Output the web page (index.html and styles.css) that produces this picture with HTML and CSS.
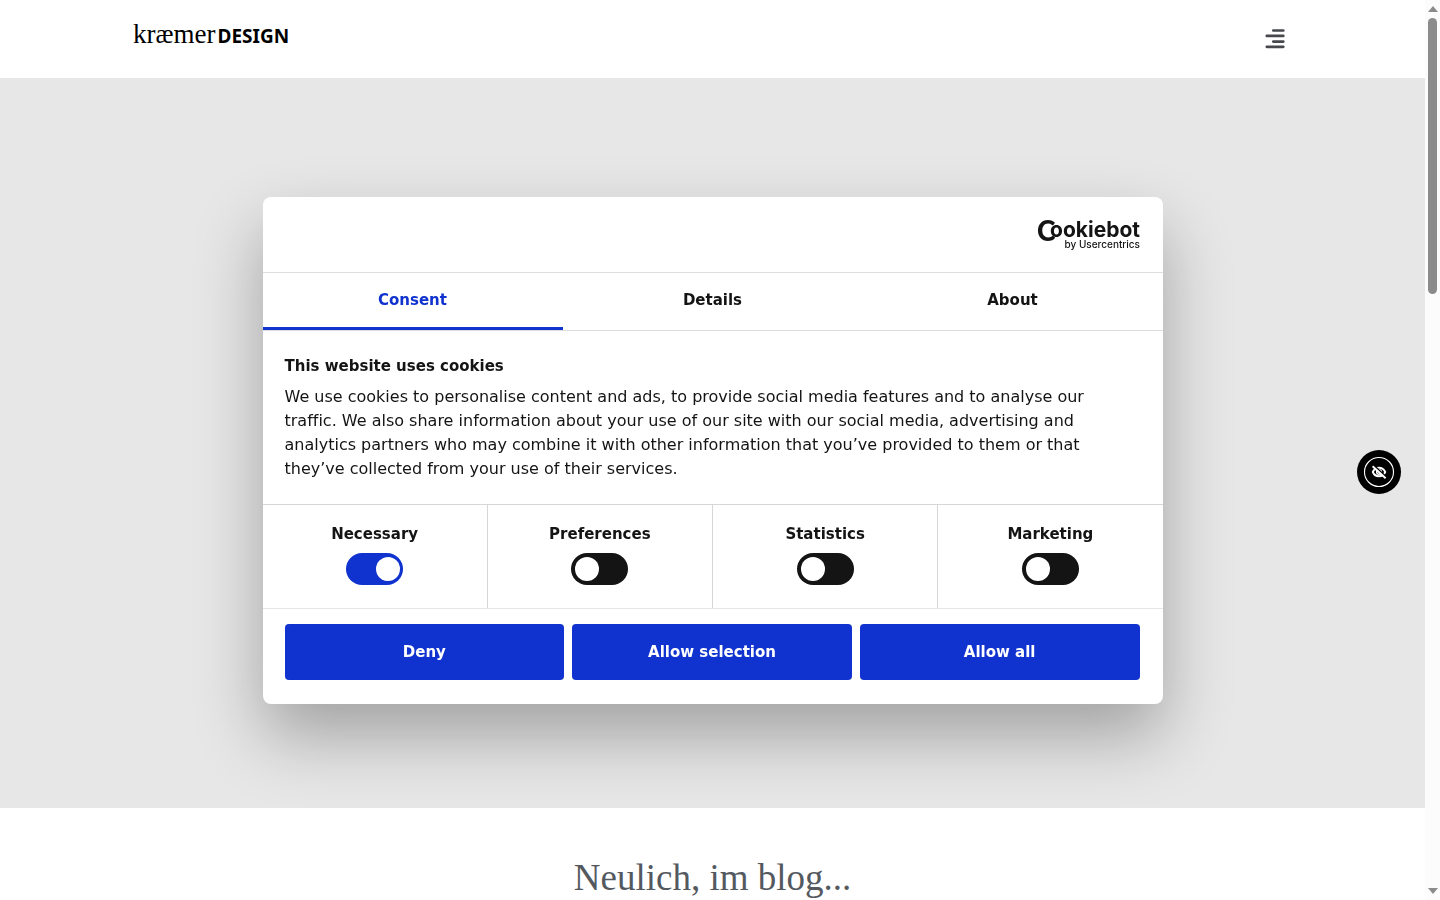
FILE: index.html
```html
<!DOCTYPE html>
<html lang="de">
<head>
	<meta charset="utf-8">
	<title>kræmerDESIGN</title>
	<meta name="viewport" content="width=device-width, initial-scale=1">
	<link rel="stylesheet" href="styles.css">
</head>
<body>
	<div class="page">
		<header class="site-header">
			<a class="logo" href="#"><span class="logo-serif">kræmer</span><span class="logo-sans">DESIGN</span></a>
			<button class="menu-btn" type="button" aria-label="Menü">
				<svg width="20" height="20" viewBox="0 0 20 20" fill="none" stroke="#47484c" stroke-width="2.7" stroke-linecap="round">
					<path d="M8.3 1.5h10M1.8 6.9h16.5M8.3 12.6h10M1.8 17.8h16.5"/>
				</svg>
			</button>
		</header>
		<main>
			<div class="hero"></div>
			<section class="blog">
				<h2>Neulich, im blog...</h2>
			</section>
		</main>
	</div>

	<button class="a11y-btn" type="button" aria-label="Barrierefreiheit">
		<svg width="44" height="44" viewBox="0 0 44 44" fill="none" stroke="#fff">
			<circle cx="22" cy="22" r="14.5" stroke-width="1.1"/>
			<path d="M15.8 22c1.3-2.9 3.5-4.3 6.2-4.3s4.9 1.4 6.2 4.3c-1.3 2.9-3.5 4.3-6.2 4.3s-4.9-1.4-6.2-4.3z" stroke-width="1.9"/>
			<circle cx="22" cy="22" r="2.3" stroke-width="1.5"/>
			<path d="M17 15.6l13 12" stroke="#000" stroke-width="1.6"/>
			<path d="M15.6 16.2l13 12" stroke-width="1.9"/>
		</svg>
	</button>

	<div class="overlay">
		<div class="dialog" role="dialog" aria-labelledby="cookie-title">
			<div class="dialog-head">
				<a href="#" aria-label="Cookiebot by Usercentrics">
					<svg class="cookiebot" width="104" height="34" viewBox="0 0 104 34" fill="#141414">
						<text class="cb-c" x="0" y="24">C</text>
						<text class="cb-name" x="103" y="20" text-anchor="end">ookiebot</text>
						<text class="cb-by" x="103" y="31" text-anchor="end">by Usercentrics</text>
					</svg>
				</a>
			</div>
			<div class="tabs" role="tablist">
				<button class="tab active" type="button" role="tab" aria-selected="true">Consent</button>
				<button class="tab" type="button" role="tab">Details</button>
				<button class="tab" type="button" role="tab">About</button>
			</div>
			<div class="dialog-body">
				<h2 id="cookie-title">This website uses cookies</h2>
				<p>We use cookies to personalise content and ads, to provide social media features and to analyse our traffic. We also share information about your use of our site with our social media, advertising and analytics partners who may combine it with other information that you’ve provided to them or that they’ve collected from your use of their services.</p>
			</div>
			<div class="types">
				<div class="type">
					<label for="necessary">Necessary</label>
					<input type="checkbox" id="necessary" checked disabled>
				</div>
				<div class="type">
					<label for="preferences">Preferences</label>
					<input type="checkbox" id="preferences">
				</div>
				<div class="type">
					<label for="statistics">Statistics</label>
					<input type="checkbox" id="statistics">
				</div>
				<div class="type">
					<label for="marketing">Marketing</label>
					<input type="checkbox" id="marketing">
				</div>
			</div>
			<div class="dialog-foot">
				<button type="button">Deny</button>
				<button type="button">Allow selection</button>
				<button type="button">Allow all</button>
			</div>
		</div>
	</div>

	<div class="scrollbar" aria-hidden="true">
		<svg width="10" height="6" viewBox="0 0 10 6"><path d="M5 0l5 6H0z" fill="#8b8b8b"/></svg>
		<div class="track"><div class="thumb"></div></div>
		<svg width="10" height="6" viewBox="0 0 10 6"><path d="M0 0h10L5 6z" fill="#8b8b8b"/></svg>
	</div>
</body>
</html>
```
FILE: styles.css
```css
* {
	box-sizing: border-box;
}
html, body {
	height: 100%;
	margin: 0;
	overflow: hidden;
}
body {
	background: #fff;
	color: #141414;
	font-family: "DejaVu Sans", sans-serif;
	font-size: 15px;
	line-height: 24px;
}
button {
	border: 0;
	padding: 0;
	font: inherit;
	cursor: pointer;
}
.page {
	margin-right: 15px;
}

/* header */
.site-header {
	display: flex;
	justify-content: space-between;
	align-items: center;
	height: 78px;
	padding: 0 140px 0 133px;
}
.logo {
	display: flex;
	align-items: baseline;
	gap: 2px;
	padding-bottom: 8px;
	color: #000;
	text-decoration: none;
	line-height: 32px;
}
.logo-serif {
	font-family: "Liberation Serif", serif;
	font-size: 27px;
}
.logo-sans {
	font-family: "Noto Sans", sans-serif;
	font-size: 19px;
	font-weight: 700;
}
.menu-btn {
	background: none;
	height: 20px;
}
.menu-btn svg, .a11y-btn svg, .cookiebot {
	display: block;
	overflow: visible;
}

.hero {
	height: 730px;
	background: #e7e7e7;
}
.blog {
	padding: 47px 20px;
}
.blog h2 {
	margin: 0;
	color: #54595f;
	font-family: "Liberation Serif", serif;
	font-size: 37px;
	font-weight: 400;
	line-height: 46px;
	text-align: center;
}

.a11y-btn {
	position: fixed;
	top: 50%;
	right: 39px;
	width: 44px;
	height: 44px;
	border-radius: 50%;
	background: #000;
}

/* cookie dialog */
.overlay {
	position: fixed;
	inset: 0 15px 0 0;
	display: flex;
	justify-content: center;
	align-items: center;
	pointer-events: none;
}
.dialog {
	width: 900px;
	max-width: 95%;
	border-radius: 8px;
	background: #fff;
	box-shadow: 0 32px 68px rgba(0,0,0,.3);
	overflow: hidden;
	pointer-events: auto;
}
.dialog-head {
	display: flex;
	justify-content: flex-end;
	align-items: center;
	height: 76px;
	padding: 0 22px;
	border-bottom: 1px solid #dedede;
}
.cb-c {
	font: 900 28px Lato, sans-serif;
}
.cb-name {
	font: 700 21px Inter, sans-serif;
}
.cb-by {
	font: 500 10px Inter, sans-serif;
}
.tabs {
	display: flex;
	height: 58px;
	border-bottom: 1px solid #dedede;
}
.tab {
	flex: 1;
	background: none;
	border-bottom: 3px solid transparent;
	color: #141414;
	font-weight: 700;
}
.tab.active {
	border-color: #1032cf;
	color: #1032cf;
}
.dialog-body {
	padding: 23px 22px;
}
.dialog-body h2 {
	margin: 0 0 7px;
	font-size: 15px;
}
.dialog-body p {
	margin: 0;
	font-size: 16px;
	font-variant-ligatures: none;
	max-width: 820px;
}
.types {
	display: flex;
	border-top: 1px solid #d6d6d6;
}
.type {
	flex: 1;
	display: flex;
	flex-direction: column;
	align-items: center;
	gap: 7px;
	padding: 17px 0 23px;
	border-right: 1px solid #d6d6d6;
	font-weight: 700;
}
.type:last-child {
	border-right: 0;
}
.type input {
	appearance: none;
	width: 57px;
	height: 32px;
	margin: 0;
	padding: 4px 3px 4px 4px;
	border-radius: 16px;
	background: #141414;
}
.type input::before {
	content: "";
	display: block;
	width: 24px;
	height: 24px;
	border-radius: 50%;
	background: #fff;
}
.type input:checked {
	background: #1032cf;
}
.type input:checked::before {
	margin-left: auto;
}
.dialog-foot {
	display: flex;
	gap: 8px;
	padding: 15px 23px 24px 22px;
	border-top: 1px solid #e6e6e6;
}
.dialog-foot button {
	flex: 1;
	height: 56px;
	border-radius: 4px;
	background: #1032cf;
	color: #fff;
	font-weight: 700;
}

/* scrollbar */
.scrollbar {
	position: fixed;
	inset: 0 0 0 auto;
	display: flex;
	flex-direction: column;
	align-items: center;
	gap: 6px;
	width: 15px;
	padding: 6px 0;
	background: #fcfcfc;
}
.track {
	flex: 1;
}
.thumb {
	width: 9px;
	height: 32%;
	border-radius: 5px;
	background: #8b8b8b;
}
```
